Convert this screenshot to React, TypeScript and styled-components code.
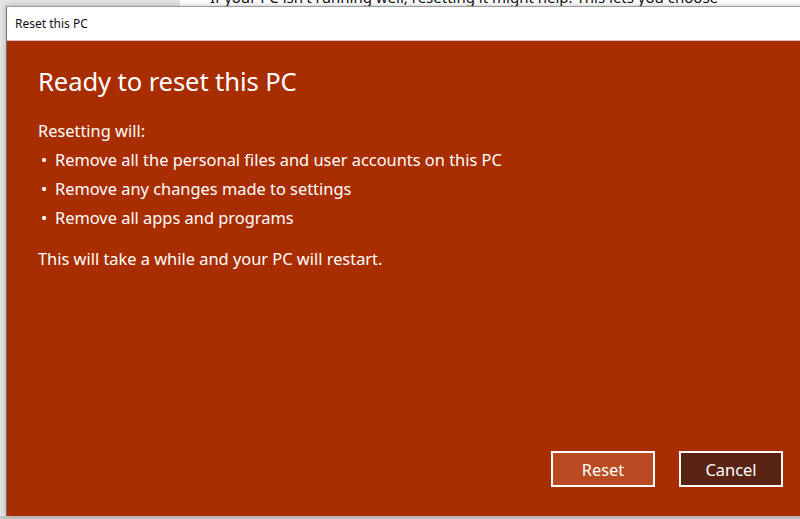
import styled, { createGlobalStyle } from 'styled-components';

const Global = createGlobalStyle`
    html, body {
        margin: 0;
        padding: 0;
        overflow: hidden;
    }
    body {
        font-family: "Noto Sans", "Open Sans", "Liberation Sans", sans-serif;
    }
`;

const Desktop = styled.div`
    position: relative;
    width: 800px;
    height: 519px;
    display: flex;
    background: #c9c9c9;
    overflow: hidden;
`;

const Sidebar = styled.div`
    width: 180px;
    height: 516px;
    background: #e4e4e4;
    font-size: 15px;
    color: #111;
`;

const SideItem = styled.div`
    margin-top: 116px;
    margin-left: -48px;
`;

const Main = styled.div`
    flex: 1;
    height: 516px;
    background: #ffffff;
`;

const Blurb = styled.p`
    margin: -13px 0 0 30px;
    font-size: 15px;
    color: #111;
    white-space: nowrap;
`;

// the dialog window sits on top of the settings page
const Dialog = styled.div`
    position: absolute;
    left: 6px;
    top: 6px;
    width: 800px;
    height: 510px;
    display: flex;
    flex-direction: column;
    border-left: 1px solid #6f6f6f;
    border-top: 1px solid #9a9a9a;
    box-sizing: border-box;
    box-shadow: 0 0 6px rgba(0,0,0,0.25);
`;

const TitleBar = styled.div`
    height: 33px;
    display: flex;
    align-items: center;
    padding-left: 8px;
    background: #ffffff;
    font-size: 12px;
    color: #111;
    border-bottom: 1px solid #d9c2ba;
`;

const Body = styled.div`
    flex: 1;
    display: flex;
    flex-direction: column;
    background: #a82d00;
    color: #ffffff;
    padding: 23px 23px 29px 31px;
`;

const Heading = styled.h1`
    margin: 0 0 17px 0;
    font-size: 25.6px;
    font-weight: 400;
    letter-spacing: -0.1px;
`;

const P = styled.p`
    margin: 0;
    font-size: 16.4px;
    line-height: 29px;
`;

const List = styled.ul`
    list-style: none;
    margin: 0 0 12px 0;
    padding: 0;
`;

const Item = styled.li`
    display: flex;
    font-size: 16.4px;
    line-height: 29px;

    &::before {
        content: '•';
        width: 17px;
        padding-left: 3px;
        box-sizing: border-box;
    }
`;

const Footer = styled.div`
    margin-top: auto;
    display: flex;
    justify-content: flex-end;
    gap: 24px;
`;

const Button = styled.button<{ $dark?: boolean }>`
    width: 104px;
    height: 36px;
    border: 2px solid #ffffff;
    background: ${p => p.$dark ? '#5a2414' : '#b94a22'};
    color: #ffffff;
    font-family: inherit;
    font-size: 16.4px;
    padding: 0;
`;

export default function App() {
    return (
        <>
            <Global />
            <Desktop>
                <Sidebar><SideItem>Info</SideItem></Sidebar>
                <Main>
                    <Blurb>If your PC isn't running well, resetting it might help. This lets you choose</Blurb>
                </Main>
                <Dialog>
                    <TitleBar>Reset this PC</TitleBar>
                    <Body>
                        <Heading>Ready to reset this PC</Heading>
                        <P>Resetting will:</P>
                        <List>
                            <Item>Remove all the personal files and user accounts on this PC</Item>
                            <Item>Remove any changes made to settings</Item>
                            <Item>Remove all apps and programs</Item>
                        </List>
                        <P>This will take a while and your PC will restart.</P>
                        <Footer>
                            <Button>Reset</Button>
                            <Button $dark>Cancel</Button>
                        </Footer>
                    </Body>
                </Dialog>
            </Desktop>
        </>
    );
}
